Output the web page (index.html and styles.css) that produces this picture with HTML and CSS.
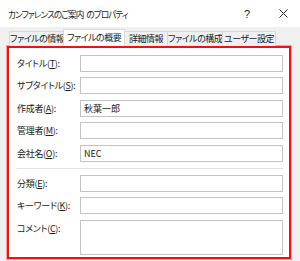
FILE: index.html
```html
<!DOCTYPE html>
<html lang="ja">
<head>
  <meta charset="UTF-8" />
  <title>カンファレンスのご案内 のプロパティ</title>
  <link rel="stylesheet" href="styles.css">
</head>
<body>
  <div class="window">
    <div class="titlebar">
      <span class="title">カンファレンスのご案内 のプロパティ</span>
      <span class="help">?</span>
      <span class="close">
        <svg width="9" height="9" viewBox="0 0 9 9"><path d="M0.5 0.5 L8.5 8.5 M8.5 0.5 L0.5 8.5" stroke="#222" stroke-width="1" fill="none"/></svg>
      </span>
    </div>

    <div class="tabs">
      <div class="tab w-info">ファイルの情報</div>
      <div class="tab w-summary active">ファイルの概要</div>
      <div class="tab w-detail">詳細情報</div>
      <div class="tab w-contents">ファイルの構成</div>
      <div class="tab w-custom">ユーザー設定</div>
    </div>

    <div class="panel">
      <div class="fields">
        <label>タイトル(<u>T</u>):</label>
        <div class="box"></div>
        <label>サブタイトル(<u>S</u>):</label>
        <div class="box"></div>
        <label>作成者(<u>A</u>):</label>
        <div class="box">秋葉一郎</div>
        <label>管理者(<u>M</u>):</label>
        <div class="box"></div>
        <label>会社名(<u>O</u>):</label>
        <div class="box">NEC</div>
      </div>
      <div class="sep"></div>
      <div class="fields">
        <label>分類(<u>E</u>):</label>
        <div class="box"></div>
        <label>キーワード(<u>K</u>):</label>
        <div class="box"></div>
        <label class="top">コメント(<u>C</u>):</label>
        <div class="box tall"></div>
      </div>
    </div>
  </div>
</body>
</html>
```

FILE: styles.css
```css
body {
  margin: 0;
  font-family: "Noto Sans CJK JP", "Noto Sans", sans-serif;
  font-feature-settings: "palt";
  font-size: 9px;
  color: #1a1a1a;
  white-space: nowrap;
}

.window {
  width: 300px;
  height: 261px;
  background-color: #f0f0f0;
  overflow: hidden;
}

.titlebar {
  height: 27px;
  background-color: white;
  display: flex;
  align-items: center;
  padding-left: 8px;
}

.title {
  flex: 1;
  font-size: 8.6px;
  letter-spacing: -0.9px;
  word-spacing: 2px;
}

.help {
  width: 12px;
  font-size: 11px;
  font-family: "Liberation Sans", sans-serif;
  margin-right: 23px;
}

.close {
  width: 9px;
  display: flex;
  align-items: center;
  margin-right: 12px;
}

.tabs {
  display: flex;
  align-items: flex-end;
  height: 17px;
  padding: 2px 0 0 9px;
}

.tab {
  height: 14px;
  line-height: 14px;
  text-align: center;
  letter-spacing: -0.5px;
  border: 1px solid #d9d9d9;
  border-bottom: none;
  background-color: #f0f0f0;
  margin-right: -1px;
}

.w-info { width: 53px; }
.w-summary { width: 60px; }
.w-detail { width: 42px; }
.w-contents { width: 54px; }
.w-custom { width: 52px; }

.tab.active {
  height: 16px;
  line-height: 15px;
  background-color: white;
  position: relative;
  z-index: 1;
}

.panel {
  box-sizing: border-box;
  margin: 0 9px 0 7px;
  height: 213px;
  background-color: white;
  border: 2px solid #ee1111;
  box-shadow: 0 0 0 1px #f8a0a0;
  padding: 7px 6px 0 8px;
}

.fields {
  display: grid;
  grid-template-columns: 63px 1fr;
  row-gap: 5.4px;
  align-items: center;
}

.fields label {
  letter-spacing: -0.3px;
}

.fields label u {
  text-underline-offset: 1px;
}

.fields label.top {
  align-self: start;
  padding-top: 2px;
}

.box {
  height: 15px;
  border: 1px solid #c2c2c8;
  line-height: 15px;
  padding-left: 3px;
}

.box.tall {
  height: 33px;
}

.sep {
  height: 1px;
  background-color: #e3e3e3;
  margin: 6px 0 6.5px 0;
}
```
